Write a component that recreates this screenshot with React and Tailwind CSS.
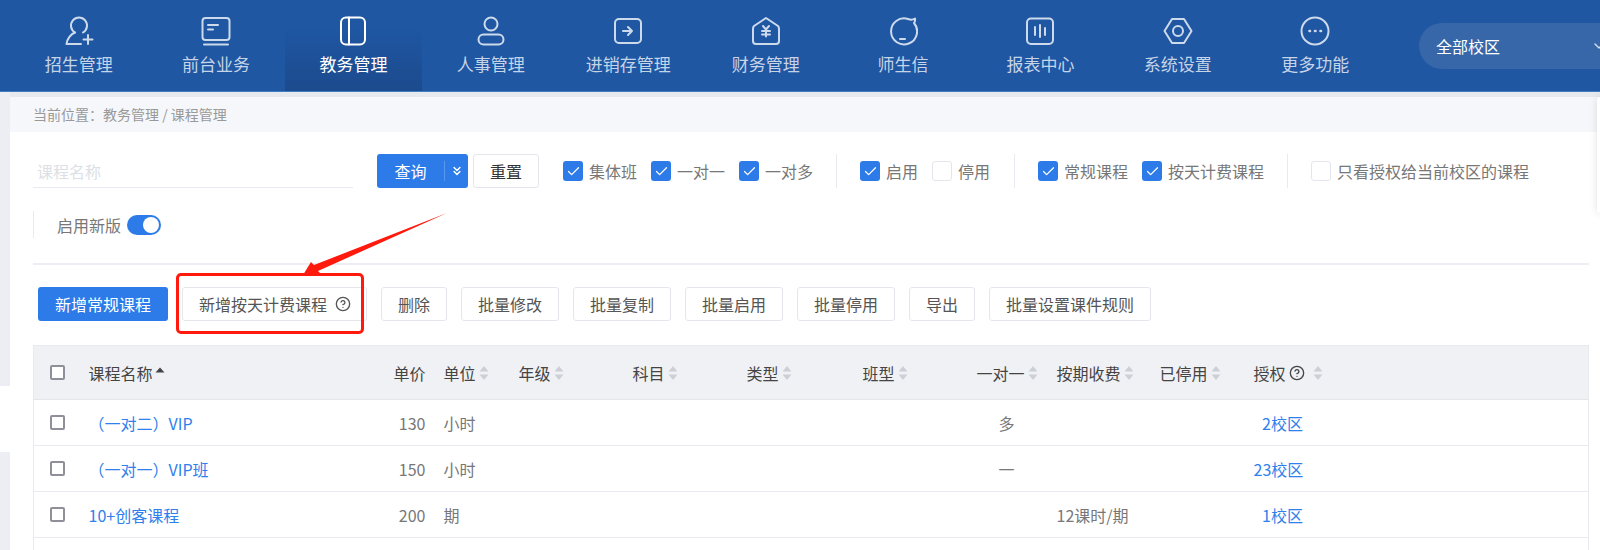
import React from "react";
import { Check, ChevronDown, ChevronsDown, CircleHelp } from "lucide-react";

const NAV_ICONS = {
  recruit: (
    <>
      <path d="M11 16.5A8 8 0 1 1 19 16.5" />
      <path d="M11 16.5C7 18 3 23 2.5 28H17" />
      <path d="M24 19v9M19.5 23.5h9" />
    </>
  ),
  desk: (
    <>
      <rect x="1.5" y="2" width="27" height="22" rx="3" />
      <path d="M7 9h10M7 13.5h5M3 28.5h24" />
    </>
  ),
  book: (
    <>
      <rect x="3" y="1.5" width="24" height="27" rx="5" />
      <path d="M11 1.5v27" />
    </>
  ),
  person: (
    <>
      <circle cx="15" cy="8" r="6.5" />
      <rect x="2.5" y="18.5" width="25" height="10" rx="5" />
    </>
  ),
  stock: (
    <>
      <rect x="2" y="3" width="26" height="24" rx="4" />
      <path d="M10 15h9M15 11l4 4-4 4" />
    </>
  ),
  finance: (
    <>
      <path d="M15 2L27 10Q28 11 28 13V25Q28 28 25 28H5Q2 28 2 25V13Q2 11 3 10Z" />
      <path d="M12 10l3 3.5 3-3.5M11 15h8M11 18.5h8M15 13.5v7" />
    </>
  ),
  message: (
    <>
      <path d="M26 7A13 13 0 1 1 20 3Q24 4.5 27 2.5Q27.5 5 26 7Z" />
      <path d="M12 23h5" />
    </>
  ),
  report: (
    <>
      <rect x="2" y="2.5" width="26" height="25.5" rx="4" />
      <path d="M10 11v8M15 9v12M20 12v7" />
    </>
  ),
  settings: (
    <>
      <path d="M9 3H21L28.5 15L21 27H9L1.5 15Z" />
      <circle cx="15" cy="15" r="5" />
    </>
  ),
  more: (
    <>
      <circle cx="15" cy="15" r="13.5" />
      <path d="M9.5 15h.5M15 15h.5M20.5 15h.5" strokeWidth="2.6" />
    </>
  ),
};

const navItems = [
  { label: "招生管理", icon: "recruit" },
  { label: "前台业务", icon: "desk" },
  { label: "教务管理", icon: "book", active: true },
  { label: "人事管理", icon: "person" },
  { label: "进销存管理", icon: "stock" },
  { label: "财务管理", icon: "finance" },
  { label: "师生信", icon: "message" },
  { label: "报表中心", icon: "report" },
  { label: "系统设置", icon: "settings" },
  { label: "更多功能", icon: "more" },
];

const actionButtons = ["删除", "批量修改", "批量复制", "批量启用", "批量停用", "导出", "批量设置课件规则"];

const courses = [
  { name: "（一对二）VIP", price: 130, unit: "小时", oneToOne: "多", auth: "2校区" },
  { name: "（一对一）VIP班", price: 150, unit: "小时", oneToOne: "一", auth: "23校区" },
  { name: "10+创客课程", price: 200, unit: "期", period: "12课时/期", auth: "1校区" },
];

const FilterCheck = ({ label, checked }) => (
  <label className="flex items-center gap-[6px] text-[16px] text-[#777]">
    {checked ? (
      <span className="flex h-[20px] w-[20px] items-center justify-center rounded-[3px] bg-[#2c7be8] text-white">
        <Check size={15} strokeWidth={2} />
      </span>
    ) : (
      <span className="h-[20px] w-[20px] rounded-[3px] border border-[#e4e6ee] bg-white"></span>
    )}
    {label}
  </label>
);

const Divider = () => <div className="mx-[23px] h-[34px] w-px bg-[#e8eaef]"></div>;

const SortIcon = () => (
  <svg width="10" height="16" viewBox="0 0 10 16" className="ml-[3px] shrink-0" fill="#ccd0d6">
    <path d="M5 1L9.5 6.5H.5Z" />
    <path d="M5 15L.5 9.5H9.5Z" />
  </svg>
);

const TableCheck = () => <span className="block h-[15px] w-[15px] rounded-[2px] border-2 border-[#8f8f99] bg-white"></span>;

const HeadCell = ({ children, sort = true }) => (
  <th className="p-0 text-left font-normal">
    <div className="flex items-center">
      {children}
      {sort && <SortIcon />}
    </div>
  </th>
);

export default function App() {
  return (
    <div className="relative h-[550px] w-[1600px] overflow-hidden bg-white font-['Noto_Sans_CJK_SC','Noto_Sans',sans-serif]">
      {/* 顶部导航 */}
      <nav className="flex h-[92px] overflow-hidden border-b border-[#3f7cc0] bg-[#1f57a3] pl-[10px]">
        {navItems.map((item) => (
          <div
            key={item.label}
            className={`flex h-full w-[137.4px] shrink-0 flex-col items-center pt-[16px] ${
              item.active ? "bg-gradient-to-b from-[#1f57a3] from-30% to-[#1c4a8d] text-white" : "text-[#c6d4e8]"
            }`}
          >
            <svg
              width="30"
              height="30"
              viewBox="0 0 30 30"
              fill="none"
              stroke={item.active ? "#ffffff" : "#cddaec"}
              strokeWidth="2"
              strokeLinecap="round"
              strokeLinejoin="round"
            >
              {NAV_ICONS[item.icon]}
            </svg>
            <span className="mt-[6px] text-[17px] leading-[24px] whitespace-nowrap">{item.label}</span>
          </div>
        ))}
        <div className="mt-[23px] ml-[35px] flex h-[46px] w-[188px] shrink-0 items-center justify-between rounded-l-full bg-[#3767a9] pl-[17px] text-[16px] text-white">
          全部校区
          <ChevronDown size={16} className="text-[#d5e0f0]" />
        </div>
      </nav>

      <div className="flex">
        {/* 左侧收起的菜单 */}
        <aside className="flex h-[458px] w-[10px] shrink-0 flex-col bg-[#eceef3]">
          <div className="h-[294px]"></div>
          <div className="h-[66px] bg-white"></div>
        </aside>

        <main className="flex-1 bg-white">
          <div className="h-[5px] bg-[#e6e9ee]"></div>
          <div className="flex h-[35px] items-center bg-[#f5f7fb] pl-[23px] text-[14px] text-[#999]">
            当前位置：教务管理 / 课程管理
          </div>

          <div className="pr-[12px] pl-[23px]">
            {/* 筛选 */}
            <div className="mt-[22px] flex h-[34px] items-center whitespace-nowrap">
              <div className="flex h-[34px] w-[320px] items-center border-b border-[#e8eaef] pl-[4px] text-[16px] text-[#dcdfe6]">
                课程名称
              </div>
              <div className="ml-[24px] flex h-[34px] w-[91px] items-center rounded-[3px] bg-[#2c7be8] text-[16px] text-white">
                <span className="w-[67px] text-center">查询</span>
                <span className="h-[20px] w-px bg-[#5a97ee]"></span>
                <ChevronsDown size={14} strokeWidth={2.5} className="ml-[5px]" />
              </div>
              <div className="ml-[5px] flex h-[34px] w-[66px] items-center justify-center rounded-[3px] border border-[#e4e6ec] text-[16px] text-[#333]">
                重置
              </div>
              <div className="ml-[24px] flex gap-[14px]">
                <FilterCheck label="集体班" checked />
                <FilterCheck label="一对一" checked />
                <FilterCheck label="一对多" checked />
              </div>
              <Divider />
              <div className="flex gap-[14px]">
                <FilterCheck label="启用" checked />
                <FilterCheck label="停用" />
              </div>
              <div className="mr-[23px] ml-[24px] h-[34px] w-px bg-[#e8eaef]"></div>
              <div className="flex gap-[14px]">
                <FilterCheck label="常规课程" checked />
                <FilterCheck label="按天计费课程" checked />
              </div>
              <Divider />
              <FilterCheck label="只看授权给当前校区的课程" />
            </div>

            <div className="mt-[23px] flex h-[27px] items-center border-l border-[#e8eaef] pl-[23px] text-[16px] text-[#777]">
              启用新版
              <span className="ml-[6px] flex h-[20px] w-[34px] items-center justify-end rounded-full bg-[#2c7be8] pr-[2px]">
                <span className="h-[16px] w-[16px] rounded-full bg-white"></span>
              </span>
            </div>

            <div className="mt-[25px] h-[2px] bg-[#eceef3]"></div>

            {/* 操作按钮 */}
            <div className="mt-[22px] flex gap-[14px] pl-[5px] text-[16px] whitespace-nowrap text-[#555]">
              <button className="h-[34px] rounded-[3px] bg-[#2c7be8] px-[17px] text-white">新增常规课程</button>
              <button className="flex h-[34px] w-[185px] items-center rounded-[3px] border border-[#e4e6ec] pl-[16px]">
                新增按天计费课程
                <CircleHelp size={16} className="ml-[8px]" />
              </button>
              {actionButtons.map((text) => (
                <button key={text} className="h-[34px] rounded-[3px] border border-[#e4e6ec] px-[16px]">
                  {text}
                </button>
              ))}
            </div>

            {/* 课程表格 */}
            <table className="mt-[24px] w-[1555px] table-fixed border-collapse border-x border-t border-[#e8eaef] text-[16px]">
              <colgroup>
                <col className="w-[55px]" />
                <col className="w-[281px]" />
                <col className="w-[56px]" />
                <col className="w-[93px]" />
                <col className="w-[114px]" />
                <col className="w-[114px]" />
                <col className="w-[116px]" />
                <col className="w-[114px]" />
                <col className="w-[80px]" />
                <col className="w-[103px]" />
                <col className="w-[94px]" />
                <col className="w-[335px]" />
              </colgroup>
              <thead>
                <tr className="h-[54px] border-b border-[#e4e6ea] bg-[#f0f1f5] text-[#444]">
                  <th className="p-0 pl-[16px] font-normal">
                    <TableCheck />
                  </th>
                  <th className="p-0 text-left font-normal">
                    <div className="flex items-center">
                      课程名称
                      <svg width="10" height="6" viewBox="0 0 10 6" className="mb-[6px] ml-[2px]" fill="#444">
                        <path d="M5 .5L9.5 5.5H.5Z" />
                      </svg>
                    </div>
                  </th>
                  <th className="p-0 text-right font-normal">单价</th>
                  <th className="p-0 pl-[18px] font-normal">
                    <div className="flex items-center">
                      单位
                      <SortIcon />
                    </div>
                  </th>
                  <HeadCell>年级</HeadCell>
                  <HeadCell>科目</HeadCell>
                  <HeadCell>类型</HeadCell>
                  <HeadCell>班型</HeadCell>
                  <HeadCell>一对一</HeadCell>
                  <HeadCell>按期收费</HeadCell>
                  <HeadCell>已停用</HeadCell>
                  <th className="p-0 text-left font-normal">
                    <div className="flex items-center">
                      授权
                      <CircleHelp size={16} className="ml-[3px]" />
                      <span className="ml-[5px]">
                        <SortIcon />
                      </span>
                    </div>
                  </th>
                </tr>
              </thead>
              <tbody className="text-[#777]">
                {courses.map((course) => (
                  <tr key={course.name} className="h-[46px] border-b border-[#e8eaef]">
                    <td className="p-0 pl-[16px]">
                      <TableCheck />
                    </td>
                    <td className="p-0 text-[#2f7fec]">{course.name}</td>
                    <td className="p-0 text-right">{course.price}</td>
                    <td className="p-0 pl-[18px]">{course.unit}</td>
                    <td className="p-0"></td>
                    <td className="p-0"></td>
                    <td className="p-0"></td>
                    <td className="p-0"></td>
                    <td className="p-0 pr-[20px] text-center">{course.oneToOne}</td>
                    <td className="p-0 whitespace-nowrap">{course.period}</td>
                    <td className="p-0"></td>
                    <td className="p-0 pr-[285px] text-right whitespace-nowrap text-[#2f7fec]">{course.auth}</td>
                  </tr>
                ))}
                <tr className="h-[46px]">
                  <td colSpan={12}></td>
                </tr>
              </tbody>
            </table>
          </div>
        </main>
      </div>

      {/* 右侧浮动面板 */}
      <div className="absolute top-[97px] left-[1597px] h-[116px] w-[20px] rounded-l-[3px] bg-white shadow-[0_0_8px_rgba(0,0,0,0.12)]"></div>

      {/* 截图上的红色标注 */}
      <div className="absolute top-[273px] left-[176px] h-[61px] w-[188px] rounded-[5px] border-[3px] border-[#ff1a0d]"></div>
      <svg className="absolute top-0 left-0" width="1600" height="550" fill="#ff1a0d">
        <path d="M447 213L314 265L311 262L303 275L322 275L318 271Z" />
      </svg>
    </div>
  );
}
